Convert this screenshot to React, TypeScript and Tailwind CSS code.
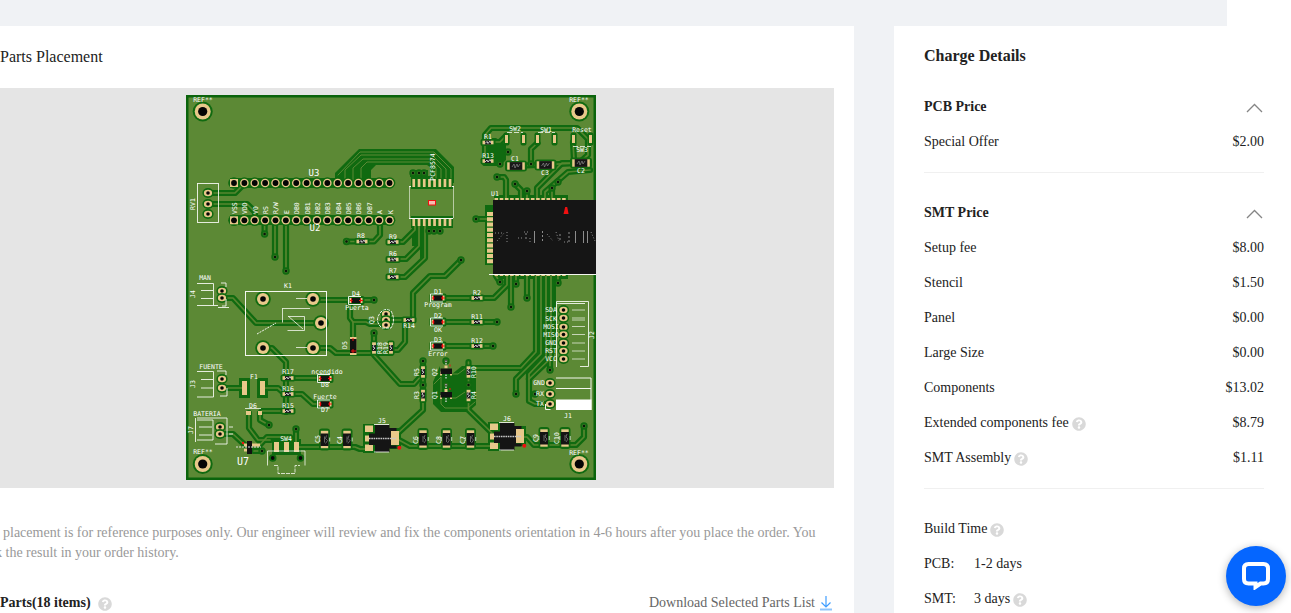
import React from "react";
import { FaQuestionCircle } from "react-icons/fa";

type Pt = [number, number];

const COPPER = "#5c8935";
const MASK = "#106a10";
const PAD = "#e8c88a";

const pinX = Array.from({ length: 16 }, (_, i) => 234 + i * 10.37);
const pinNames = ["VSS", "VDD", "V0", "RS", "R/W", "E", "DB0", "DB1", "DB2", "DB3", "DB4", "DB5", "DB6", "DB7", "A", "K"];
const pcfX = [413.7, 419, 424.2, 429.4, 434.5, 439.7, 444.9, 450];

const traces: string[] = [
  "208,193 235,193 244,184",
  "208,204 247,204 255,212 255,220",
  "264.6,220 264.6,234",
  "275,220 275,257",
  "286,220 286,271",
  "393,242 403,242 415,230 415,226",
  "393,259 406,259 419,246 419,226",
  "393,277 405,277 425,258 425,226",
  "346.5,241.5 374,241.5 380,235 380,220",
  "461,260 445,276 430,276 413,293 413,320 405,320 405,342 398,350 391,350",
  "313,300 374,300",
  "350,303 350,318 353,322 366,322 370,324 386,324",
  "353,322 353,346",
  "386,320 413,320",
  "313,348 330,348 336,353 391,353",
  "374,333 374,355 400,384 414,384 423,374",
  "438,298 477,298 494,298 507,285 507,276",
  "438,322 497,322",
  "438,346 493,346",
  "222,298 233,298 256,323 321,323",
  "222,388 243,388",
  "263,388 278,388 286,395",
  "263,348 272,348 286,362 286,412",
  "288,378 325,378",
  "288,394 302,394 313,404 325,404",
  "249,413 249,428 258,440 270,440",
  "260,413 260,420 269,425",
  "262,411 288,411",
  "220,434 233,434 247,447",
  "252,447 258,447 267,437 290,437",
  "254,451 262,451",
  "296,429 296,447 355,447 360,449 368,449",
  "397,434 423,410 423,362",
  "399,440 410,446 495,446",
  "520,437 527,437 534,445 576,445 584,437 584,426",
  "468.5,362 468.5,410 492,433",
  "485,163 485,135 491,128 577,128 588,139 588,155 580,162",
  "492,142 500,142 506,136",
  "537.5,143 531,149 531,164",
  "516,166 580,163",
  "573,163 562,163 537,188 537,198",
  "590,170 568,172 545,192 545,198",
  "497,177 504,177 506,180 506,198",
  "515,184 521,190 521,198",
  "527,191 527,198",
  "552,188 552,198",
  "573,142 574,160",
  "476,219 488,219",
  "496,276 500,282",
  "511,276 511,307",
  "516,276 516,284",
  "527,276 527,298",
  "558,276 558,283",
  "536,276 536,352 521,368 470,368",
  "541,276 541,354 516,379 516,394",
  "546,276 546,356 529,374 529,401 535,404 550,404",
  "551,276 551,358 529,379",
  "550,369 550,350",
];

const vias: Pt[] = [
  [264.6, 234], [275, 257], [286, 271], [346.5, 241.5], [374, 300], [461, 260], [374, 333], [497, 322], [493, 346],
  [269, 425], [262, 451], [296, 429], [584, 426], [497, 177], [515, 184], [527, 191], [508, 152], [531, 164], [500, 164],
  [552, 188], [558, 182], [476, 219], [500, 282], [511, 307], [516, 284], [527, 298], [558, 283], [516, 394],
  [550, 370], [535, 394], [413, 173], [419, 173], [424, 173], [429, 231], [434, 231], [440, 231], [423, 361], [423, 385], [446, 361], [446, 385], [468.5, 385],
];

const smallPads: Pt[] = [
  [208, 193], [208, 204], [208, 214], [222, 291], [222, 298], [222, 379], [222, 388], [220, 427], [220, 434],
  [386, 314], [386, 320], [386, 325],
  [563.5, 310], [563.5, 318], [563.5, 327], [563.5, 334.5], [563.5, 343], [563.5, 351], [563.5, 359],
  [550, 383], [550, 394], [550, 404],
];

type Label = { t: string; x: number; y: number; s?: number; r?: boolean };
const labels: Label[] = [
  { t: "REF**", x: 203, y: 102 }, { t: "REF**", x: 579, y: 102 }, { t: "REF**", x: 203, y: 454 }, { t: "REF**", x: 579, y: 455 },
  { t: "U3", x: 314, y: 176, s: 9 }, { t: "U2", x: 315, y: 231, s: 9 }, { t: "RV1", x: 195, y: 204, r: true },
  { t: "PCF8574", x: 434.5, y: 167, r: true },
  { t: "R8", x: 361, y: 238 }, { t: "R9", x: 393, y: 239 }, { t: "R6", x: 393, y: 256 }, { t: "R7", x: 393, y: 273 },
  { t: "R1", x: 488, y: 139 }, { t: "R13", x: 488, y: 158 }, { t: "SW2", x: 515, y: 131 }, { t: "SW1", x: 546, y: 132 },
  { t: "Reset", x: 582, y: 132 }, { t: "SW3", x: 582, y: 152 }, { t: "C1", x: 515, y: 161 }, { t: "C3", x: 545, y: 175 },
  { t: "C2", x: 581, y: 173 }, { t: "U1", x: 495, y: 196 }, { t: "MAN", x: 205, y: 280 }, { t: "J4", x: 195, y: 294, r: true },
  { t: "K1", x: 288, y: 288 }, { t: "D4", x: 356, y: 296 }, { t: "Puerta", x: 357, y: 310 }, { t: "Q3", x: 374, y: 320, r: true },
  { t: "R14", x: 409, y: 328 }, { t: "D5", x: 347, y: 345, r: true }, { t: "R18", x: 382, y: 348, r: true }, { t: "R19", x: 388, y: 348, r: true },
  { t: "D1", x: 438, y: 294 }, { t: "Program", x: 438, y: 307 }, { t: "D2", x: 438, y: 318 }, { t: "OK", x: 438, y: 332 },
  { t: "D3", x: 438, y: 342 }, { t: "Error", x: 438, y: 356 }, { t: "R2", x: 477, y: 295 }, { t: "R11", x: 477, y: 319 }, { t: "R12", x: 477, y: 343 },
  { t: "SDA", x: 551, y: 312 }, { t: "SCK", x: 551, y: 321 }, { t: "MOSI", x: 551, y: 329 }, { t: "MISO", x: 551, y: 337 },
  { t: "GND", x: 551, y: 345 }, { t: "RST", x: 551, y: 353 }, { t: "VCC", x: 551, y: 361 }, { t: "J2", x: 594, y: 335, r: true },
  { t: "GND", x: 539, y: 385 }, { t: "RX", x: 540, y: 396 }, { t: "TX", x: 540, y: 406 }, { t: "J1", x: 568, y: 418 },
  { t: "FUENTE", x: 211, y: 369 }, { t: "J3", x: 195, y: 384, r: true }, { t: "F1", x: 254, y: 379 }, { t: "R17", x: 288, y: 374 },
  { t: "R16", x: 288, y: 391 }, { t: "R15", x: 288, y: 408 }, { t: "ncendido", x: 327, y: 374 }, { t: "D8", x: 325, y: 387 },
  { t: "Fuerte", x: 325, y: 399 }, { t: "D7", x: 325, y: 412 }, { t: "D6", x: 253, y: 408 }, { t: "BATERIA", x: 207, y: 416 },
  { t: "J7", x: 193, y: 430, r: true }, { t: "U7", x: 243, y: 465, s: 10 }, { t: "SW4", x: 286, y: 441 }, { t: "C5", x: 320, y: 439, r: true },
  { t: "C4", x: 342, y: 440, r: true }, { t: "J5", x: 382, y: 423 }, { t: "C6", x: 418, y: 440, r: true }, { t: "C8", x: 441, y: 440, r: true },
  { t: "C7", x: 465, y: 440, r: true }, { t: "J6", x: 507, y: 421 }, { t: "C9", x: 538, y: 438, r: true }, { t: "C10", x: 559, y: 438, r: true },
  { t: "R5", x: 419, y: 372, r: true }, { t: "R3", x: 419, y: 395, r: true }, { t: "Q2", x: 437, y: 372, r: true }, { t: "Q1", x: 437, y: 395, r: true },
  { t: "R10", x: 476, y: 372, r: true }, { t: "R4", x: 476, y: 395, r: true },
];

const resistors: Pt[] = [
  [362, 241.5], [393, 242], [393, 259.5], [393, 277], [477, 298], [477, 322], [477, 346], [488, 142.5], [488, 161],
  [288, 378], [288, 394], [288, 411], [409, 320],
];
const leds: Pt[] = [[356, 300.5], [438, 298], [438, 322], [438, 346], [325, 378.5], [325, 404]];
const verticalResistors: Pt[] = [[423, 372], [423, 395.5], [468.5, 372], [468.5, 395.5], [374, 348], [391, 348]];
const verticalCaps: Pt[] = [[324.5, 439.5], [347, 439.5], [423, 439], [446.5, 439], [470.5, 439], [544, 438], [565, 438]];
const horizontalCaps: Pt[] = [[516, 166], [545.5, 165], [581, 163]];
const bigPads: Pt[] = [[263, 299], [313, 299], [321, 323], [263, 348], [313, 348]];
const mountHoles: Pt[] = [[202.7, 111.5], [579.3, 111.5], [202.7, 464], [579.3, 464]];
const dTypes: Pt[] = [[383, 438.5], [508, 436.5]];

function Board() {
  return (
    <svg className="h-[385px] w-[410px]" viewBox="186 95 410 385" role="img" aria-label="Board preview">
      <rect x="186" y="95" width="410" height="385" fill="#0b640c" />
      <rect x="188.5" y="97.5" width="405" height="380" fill={COPPER} />

      <g fill={MASK}>
        <path d="M335 183V173L359 149H436L454 167V183H430V167L427 165H376L371 170V183Z" />
        <path d="M485 138H496L506 145V160L500 166H485Z" />
        <path d="M433 382L440 366V372H452V374L462 366H476V405L468 412H441L433 404Z" />
        <path d="M412 226H428V254L420 262V246H412Z" />
        <path d="M534 276H556V352L534 374V352Z" />
        <path d="M485 205H494V265H485ZM494 274H568V279H494ZM494 195H568V201H494Z" />
        <path d="M411 176H453V189H411ZM411 216H453V228H411ZM410 170H428V177H410Z" />
        <path d="M230 178H391V188H230ZM230 215H391V225H230Z" />
        <path d="M363 424H376V453H363ZM390 428H401V449H390ZM488 422H501V451H488ZM515 426H526V446H515ZM272 439H301V455H272Z" />
        <path d="M239 378H250V398H239ZM257 378H268V398H257Z" />
      </g>

      <g fill="none" strokeLinejoin="round" strokeLinecap="round">
        {traces.map((p) => <polyline key={p} points={p} stroke={MASK} strokeWidth="6.2" />)}
        {traces.map((p) => <polyline key={p} points={p} stroke="#57862f" strokeWidth="1.7" />)}
        <g stroke={COPPER} strokeWidth="1">
          <path d="M338 175L360 152H434L451 169V178M345 180V170L361 155H432L446 169V178M353 180V168L363 159H431L441 169V178M361 180V168L367 162H430L436 168V178" />
          <path d="M434 384L441 377V404L445 408H468L475 402M452 374H458L466 368M452 398H456L465 392" />
        </g>
      </g>

      {vias.map(([x, y]) => (
        <g key={`${x}-${y}`}>
          <circle cx={x} cy={y} r="3.7" fill={MASK} />
          <circle cx={x} cy={y} r="2" fill="#3b7423" />
          <circle cx={x} cy={y} r="1.2" fill="#0a160a" />
        </g>
      ))}

      {[183, 220.3].map((y) =>
        pinX.map((x, i) => (
          <g key={`${x}-${y}`}>
            <circle cx={x} cy={y} r="5.8" fill={MASK} />
            {i === 0 ? <rect x={x - 4} y={y - 4} width="8" height="8" fill={PAD} /> : <circle cx={x} cy={y} r="4.3" fill={PAD} />}
            <circle cx={x} cy={y} r="2.9" fill="#050505" />
          </g>
        )),
      )}
      {smallPads.map(([x, y]) => (
        <g key={`${x}-${y}`}>
          <ellipse cx={x} cy={y} rx="5.6" ry="4.9" fill={MASK} />
          <ellipse cx={x} cy={y} rx="4.1" ry="3.3" fill={PAD} />
          <circle cx={x} cy={y} r="1.8" fill="#050505" />
        </g>
      ))}
      {bigPads.map(([x, y]) => (
        <g key={`${x}-${y}`}>
          <circle cx={x} cy={y} r="7.8" fill={MASK} />
          <circle cx={x} cy={y} r="6" fill={PAD} />
          <circle cx={x} cy={y} r="2.8" fill="#050505" />
        </g>
      ))}
      {mountHoles.map(([x, y]) => (
        <g key={`${x}-${y}`}>
          <circle cx={x} cy={y} r="10" fill={MASK} />
          <circle cx={x} cy={y} r="8" fill={PAD} />
          <circle cx={x} cy={y} r="4.6" fill="#050505" />
        </g>
      ))}

      <g fill={PAD}>
        {pcfX.map((x) => <path key={x} d={`M${x - 1.3} 179h2.7v8h-2.7zM${x - 1.3} 218h2.7v8h-2.7z`} />)}
        {Array.from({ length: 14 }, (_, i) => 494.5 + i * 5.2).map((x) => (
          <path key={x} d={`M${x} 198h3.6v2.5h-3.6zM${x} 273.5h3.6v2.5h-3.6z`} />
        ))}
        {Array.from({ length: 10 }, (_, i) => 212 + i * 5.25).map((y) => <rect key={y} x="487" y={y} width="6" height="4" />)}
        {[506.5, 523.5, 537.5, 554.5, 573.5, 590.5].map((x) => (
          <g key={x}>
            <rect x={x - 3} y="132.5" width="6" height="13" rx="2" fill={MASK} />
            <rect x={x - 1.5} y="135" width="3" height="8" />
          </g>
        ))}
        <path d="M242 381h5v14h-5zM260 381h5v14h-5zM246 411h5v4h-5zM258 411h4v4h-4z" />
        <path d="M274 442h5v10h-5zM284 442h5v10h-5zM294 442h5v10h-5z" />
      </g>

      {resistors.map(([x, y]) => (
        <g key={`${x}-${y}`}>
          <rect x={x - 7.5} y={y - 3.5} width="15" height="7" rx="2" fill={MASK} />
          <rect x={x - 5.5} y={y - 1.8} width="11" height="3.6" fill={PAD} />
          <rect x={x - 3} y={y - 2} width="6" height="4" fill="#202020" />
          <path d={`M${x - 3} ${y + 1}l2-2 1 2 2-2.5 1 2`} stroke="#d6d6d6" strokeWidth=".9" fill="none" />
        </g>
      ))}
      {leds.map(([x, y]) => (
        <g key={`${x}-${y}`}>
          <rect x={x - 8.5} y={y - 4.5} width="17" height="9" rx="2" fill={MASK} />
          <path d={`M${x + 5} ${y - 4}h-12.5v8h12.5`} stroke="#fff" strokeWidth=".9" fill="none" />
          <rect x={x - 6.5} y={y - 2.5} width="13" height="5" fill={PAD} />
          <rect x={x - 4.5} y={y - 2.7} width="9" height="5.4" fill="#111" />
          <path d={`M${x - 6} ${y}h2.5M${x + 3} ${y}h4M${x - 4.5} ${y - 2}v4M${x + 4.5} ${y - 2}v4`} stroke="#f01010" strokeWidth="1" />
        </g>
      ))}
      {verticalResistors.map(([x, y]) => (
        <g key={`${x}-${y}`}>
          <rect x={x - 3.5} y={y - 7.5} width="7" height="15" rx="2" fill={MASK} />
          <rect x={x - 1.9} y={y - 5.7} width="3.8" height="11.4" fill={PAD} />
          <rect x={x - 2} y={y - 3} width="4" height="6" fill="#202020" />
          <path d={`M${x} ${y - 3}l-1 2 2 1-2 2`} stroke="#d6d6d6" strokeWidth=".9" fill="none" />
        </g>
      ))}
      {verticalCaps.map(([x, y]) => (
        <g key={`${x}-${y}`}>
          <rect x={x - 5.5} y={y - 11} width="11" height="22" rx="3" fill={MASK} />
          <rect x={x - 3.7} y={y - 8.7} width="7.4" height="17.4" fill={PAD} />
          <rect x={x - 4} y={y - 6} width="8" height="12.5" fill="#141414" />
          <path d={`M${x} ${y - 3}v6M${x + 2} ${y - 4}l-1 3 2 2-2 3`} stroke="#999" strokeWidth=".6" fill="none" />
          <path d={`M${x - 5.2} ${y - 2}v4M${x + 5.2} ${y - 2}v4`} stroke="#fff" strokeWidth=".7" />
        </g>
      ))}
      {horizontalCaps.map(([x, y]) => (
        <g key={`${x}-${y}`}>
          <rect x={x - 11} y={y - 5.5} width="22" height="11" rx="3" fill={MASK} />
          <rect x={x - 8.8} y={y - 3.7} width="17.6" height="7.4" fill={PAD} />
          <rect x={x - 6.3} y={y - 3.9} width="12.6" height="7.8" fill="#171717" />
          <path d={`M${x - 4} ${y + 1}l2-3 1 4 2-4 1 3 2-3`} stroke="#999" strokeWidth=".6" fill="none" />
        </g>
      ))}
      {dTypes.map(([x, y]) => (
        <g key={x}>
          <path d={`M${x - 18} ${y - 13}h8v6.5h-8zM${x - 18} ${y - 3}h4v6h-4zM${x - 18} ${y + 6}h8v6.5h-8zM${x + 8} ${y - 7.5}h8v14h-8z`} fill={PAD} />
          <path d={`M${x - 8} ${y - 13.5}h14.5v3h7v3h-5.500v14.500h5.500v3h-7v3.500h-14.500v-7h-6v-11.500h6z`} fill="#151515" />
          <path d={`M${x - 14} ${y}h27`} stroke="#c8c8c8" strokeWidth="1.600" strokeDasharray="1.6 .7" />
          <path d={`M${x - 9} ${y - 14}h15M${x - 9} ${y + 13.5}h15`} stroke="#fff" strokeWidth=".8" />
          <circle cx={x + 16.3} cy={y + 9.3} r="2" fill="#f01010" />
        </g>
      ))}
      {[371.5, 395].map((y) => (
        <g key={y}>
          <path d={`M440 ${y}h2v4h-2zM450 ${y}h2v4h-2zM444.5 ${y - 6}h3v3h-3z`} fill={PAD} />
          <rect x="440.5" y={y - 3} width="11.5" height="5.5" fill="#111" />
          <path d={`M446 ${y + 3}v5M446 ${y - 11}v4`} stroke="#ddd" strokeWidth="1.3" strokeDasharray="1.5 1" />
          <path d={`M450 ${y - 5}v-2`} stroke="#f01010" />
        </g>
      ))}
      <g>
        <rect x="350" y="337" width="6.5" height="18" fill={PAD} />
        <rect x="350" y="339" width="6.5" height="14" fill="#111" />
        <path d="M353 338v3M351 351h5M353 349v4" stroke="#f01010" />
        <path d="M244 445h16M244 450h8" stroke={PAD} strokeWidth="3" />
        <rect x="247" y="441" width="5" height="13" fill="#111" />
        <path d="M236 447h25" stroke="#ddd" strokeDasharray="2 1" />
        <circle cx="243" cy="443" r="1.2" fill="#f01010" />
        <circle cx="272.7" cy="458" r="3.8" fill={MASK} /><circle cx="272.7" cy="458" r="1.9" fill="#080808" />
        <circle cx="300.5" cy="458" r="3.8" fill={MASK} /><circle cx="300.5" cy="458" r="1.9" fill="#080808" />
      </g>

      <rect x="493" y="200" width="103" height="74.5" fill="#151515" />
      <path d="M563.5 214l1.7-7h2l1.4 7z" fill="#f01010" />
      <g stroke="#8c8c8c" strokeWidth="1" fill="none">
        <path d="M534.5 231v12M575.5 231v12M583.5 231v12M587.5 231v12" />
        <path d="M542.5 231v12M560 234v8M569 232v10M526 233v8" strokeDasharray="2 2" />
        <path d="M495 233h7M497 241l8-9M507 232v10M518 238h5M524 232h5M530 242v-4M547 234l6 7M556 232l3 9M564 242h5M591 232l4 9" strokeDasharray="1 2" />
      </g>

      <g stroke="#f4f7ef" strokeWidth="1" fill="none">
        <rect x="197.5" y="183.5" width="21" height="39" strokeWidth=".9" />
        <path d="M409.5 186.5v31.5M453.5 186.5v31.5" opacity=".6" />
        <path d="M409 186.5h2M452 186.5h2M409 218.5h44" />
        <rect x="245.5" y="291.5" width="81" height="64" />
        <path d="M296 298.5h11M296 347.5h11M282 308.5h28M282.5 308.5v14M288 316.5h16.5v14h-17M288 316l15 13" strokeWidth=".8" />
        <path d="M257 334l19-11" strokeDasharray="2 1" />
        <path d="M197 283.5h16.5v22M197 305.5h21M201 290.5h12M201 298.5h12M221 283h5v4M226 299v7h-4M218 307.5h11" strokeWidth=".9" />
        <path d="M197 371.5h16.5v25.5h-16.5M201 379.5h12M201 388h12M217 371h9v4M227 388v8h-7" strokeWidth=".9" />
        <path d="M195.5 418v24M197 418h30v26h-12M197 420h16v20h-16M199 427h13M199 435h13M229 427h4M229 434h4" strokeWidth=".9" />
        <path d="M245 408.5h16M267.5 465.5v-14.5h37.5v14.5" strokeWidth=".8" />
        <path d="M274 465.500h4v8h17v-8h5" strokeWidth=".8" strokeDasharray="4 1" />
        <path d="M391 311q5 9 0 17h-9q-9-8 0-17q4-3 9 0" strokeDasharray="3 1" />
        <path d="M556.5 367V301.5H588.5V366.5H580M557 303.5h28" strokeWidth=".9" />
        <path d="M572 310h13M572 318h13M572 320h13M572 326.5h13M572 334.5h13M572 343h13M572 351h13M572 359h13" strokeWidth=".7" />
        <path d="M556 378h35v32M556 388.5h35M545.5 404v5.5h5M489 274.5h107" />
        <path d="M507 132.5h16M538 132.5h17M573 146.5h18" strokeWidth=".8" strokeDasharray="5 2" />
      </g>
      <rect x="556" y="399.5" width="35.5" height="10.5" fill="#fff" />
      <rect x="428.5" y="200.5" width="7" height="4.5" fill="#f6bcb0" stroke="#f01010" />

      <g fill="#ffffff" className="font-[DejaVu_Sans_Mono,monospace]" textAnchor="middle">
        {labels.map((l) => (
          <text
            key={`${l.t}-${l.x}-${l.y}`}
            x={l.x}
            y={l.y}
            fontSize={l.s ?? 6.5}
            transform={l.r ? `rotate(-90 ${l.x} ${l.y})` : undefined}
          >
            {l.t}
          </text>
        ))}
        {pinNames.map((n, i) => (
          <text key={n} x={pinX[i]} y="214" fontSize="6.5" textAnchor="start" transform={`rotate(-90 ${pinX[i]} 214) translate(0 3)`}>
            {n}
          </text>
        ))}
      </g>
    </svg>
  );
}

function Help({ label }: { label: string }) {
  return (
    <button type="button" aria-label={label} className="mt-0.5 text-[#d9d9d9]">
      <FaQuestionCircle className="size-3.5" />
    </button>
  );
}

function Row({ name, value, help }: { name: string; value: string; help?: boolean }) {
  return (
    <div className="flex h-[35px] items-center justify-between">
      <dt className="flex items-center gap-[3px]">
        {name}
        {help && <Help label={`About ${name}`} />}
      </dt>
      <dd>{value}</dd>
    </div>
  );
}

function ChargeGroup({ title, rows }: { title: string; rows: { name: string; value: string; help?: boolean }[] }) {
  return (
    <section className="mb-[22px] border-b border-[#f0f0f0] pb-[13px]">
      <div className="flex h-[35px] items-center justify-between">
        <h3 className="font-bold">{title}</h3>
        <button type="button" aria-label={`Collapse ${title}`} className="mt-0.5">
          <svg width="18" height="10" viewBox="0 0 18 10" fill="none" stroke="#858585" strokeWidth="1.3">
            <path d="M1 9L8.5 1.5L16 9" />
          </svg>
        </button>
      </div>
      <dl>
        {rows.map((r) => <Row key={r.name} {...r} />)}
      </dl>
    </section>
  );
}

export default function App() {
  return (
    <div className="flex h-screen flex-col overflow-hidden bg-white font-[Liberation_Serif,serif] text-sm text-[#222]">
      <div className="mr-16 h-[26px] shrink-0 bg-[#f0f2f5]" />
      <div className="flex min-h-0 flex-1 gap-10 bg-[#f0f2f5]">
        <main className="min-w-0 flex-1 overflow-hidden bg-white pt-5 pr-5">
          <h2 className="mb-5 text-base leading-[22px]">Parts Placement</h2>
          <div className="-ml-[52px] flex h-[400px] items-center justify-center bg-[#e5e5e5] pb-0.5">
            <Board />
          </div>
          <p className="mt-[35px] -ml-[5px] leading-5 whitespace-nowrap text-[#999]">
            <span className="block pl-2">
              placement is for reference purposes only. Our engineer will review and fix the components orientation in 4-6 hours after you place the order. You
            </span>
            k the result in your order history.
          </p>
          <div className="mt-[30px] flex h-5 items-center justify-between">
            <h3 className="flex items-center gap-[7px] font-bold">
              Parts(18 items)
              <Help label="About the parts" />
            </h3>
            <a href="#parts" className="flex items-center gap-1 pr-px text-[#666]">
              Download Selected Parts List
              <svg width="14" height="16" viewBox="0 0 14 16" fill="none" stroke="#409eff" strokeWidth="1.2">
                <path d="M7 1v11M2.5 7.5L7 12l4.5-4.5" />
                <path d="M1 14.5h12" stroke="#8fc4fb" strokeWidth="2" />
              </svg>
            </a>
          </div>
        </main>

        <aside className="w-[397px] shrink-0 overflow-hidden bg-white pt-5 pr-[27px] pl-[30px]">
          <h2 className="mb-[23px] text-base leading-5 font-bold">Charge Details</h2>
          <ChargeGroup title="PCB Price" rows={[{ name: "Special Offer", value: "$2.00" }]} />
          <ChargeGroup
            title="SMT Price"
            rows={[
              { name: "Setup fee", value: "$8.00" },
              { name: "Stencil", value: "$1.50" },
              { name: "Panel", value: "$0.00" },
              { name: "Large Size", value: "$0.00" },
              { name: "Components", value: "$13.02" },
              { name: "Extended components fee", value: "$8.79", help: true },
              { name: "SMT Assembly", value: "$1.11", help: true },
            ]}
          />
          <section>
            <h3 className="flex h-[35px] items-center gap-[3px]">
              Build Time
              <Help label="About build time" />
            </h3>
            <dl>
              <div className="flex h-[35px] items-center">
                <dt className="w-[50px]">PCB:</dt>
                <dd>1-2 days</dd>
              </div>
              <div className="flex h-[35px] items-center">
                <dt className="w-[50px]">SMT:</dt>
                <dd className="flex items-center gap-[3px]">
                  3 days
                  <Help label="About SMT time" />
                </dd>
              </div>
            </dl>
          </section>
        </aside>
      </div>

      <button
        type="button"
        aria-label="Open chat"
        className="fixed right-[5px] bottom-[7px] flex size-[60px] items-center justify-center rounded-full bg-[#0566ff] shadow-[0_2px_8px_rgba(0,0,0,0.3)]"
      >
        <svg width="28" height="28" viewBox="0 0 28 28" fill="none" stroke="#fff" strokeWidth="4">
          <path d="M12 21.500H6.500Q2 21.500 2 17V6.500Q2 2 6.500 2H21.500Q26 2 26 6.500V17Q26 21.500 21.500 21.500H18.500L13.500 25V19.500" />
        </svg>
      </button>
    </div>
  );
}
